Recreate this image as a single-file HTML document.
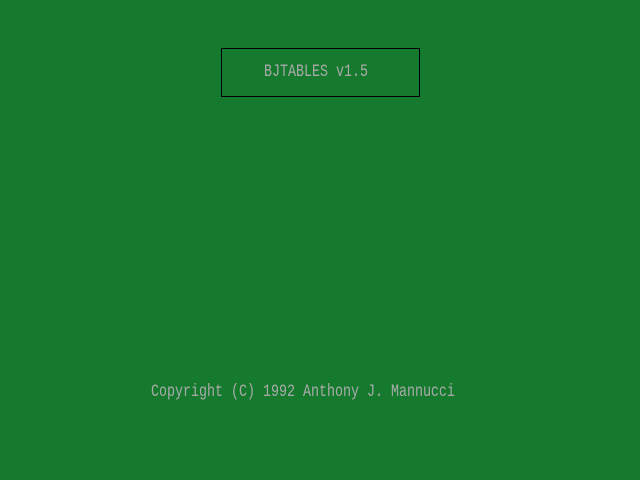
<html><head><style>
body{margin:0;width:640px;height:480px;background:#157a2d;position:relative;overflow:hidden;font-family:"Liberation Mono",monospace;font-size:13.33px;color:#aaaaaa}
.box{position:absolute;left:221px;top:48px;width:197px;height:47px;border:1px solid #000}
.t{position:absolute;white-space:pre;line-height:16px;transform:scaleY(1.3);transform-origin:0 0}
</style></head><body>
<div class="box"></div>
<div class="t" style="left:264px;top:63px">BJTABLES v1.5</div>
<div class="t" style="left:151px;top:383px">Copyright (C) 1992 Anthony J. Mannucci</div>
</body></html>
